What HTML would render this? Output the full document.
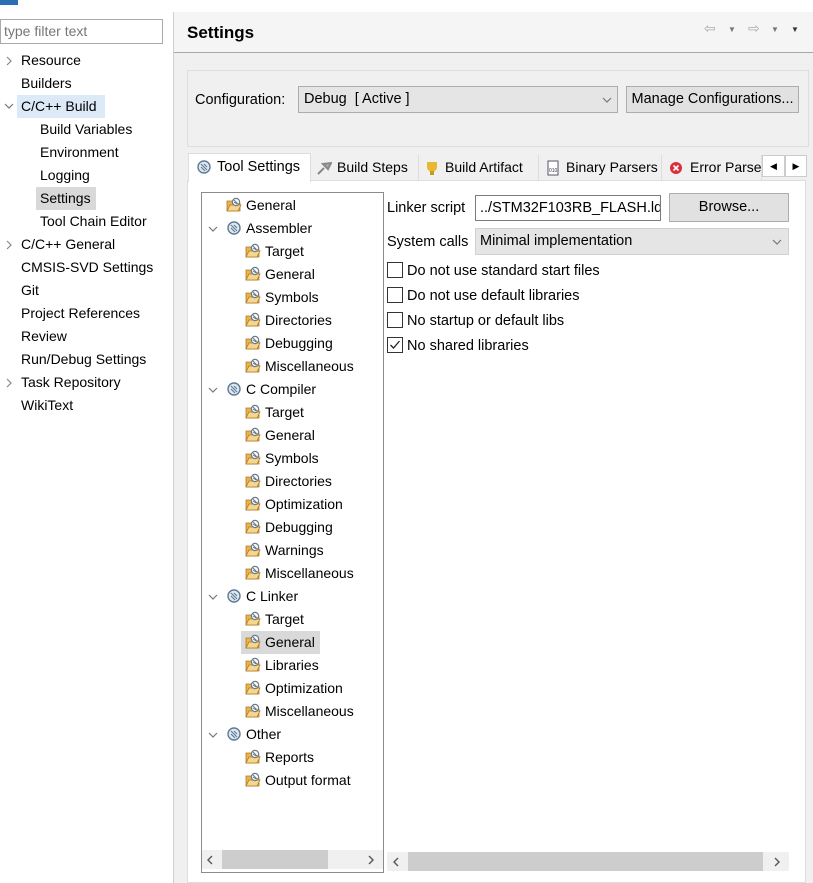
<!DOCTYPE html>
<html><head><meta charset="utf-8"><style>
*{box-sizing:border-box;margin:0;padding:0}
body{width:813px;height:883px;overflow:hidden;background:#fff;font-family:"Liberation Sans",sans-serif;font-size:14px;color:#000;position:relative}
.a{position:absolute;white-space:nowrap}
.r{position:absolute;height:22px;line-height:22px;white-space:nowrap}
svg.i{position:absolute;width:16px;height:16px}
svg.c{position:absolute;width:10px;height:10px}
.cb{position:absolute;width:16px;height:16px;border:1px solid #333;background:#fff;left:387px}
.sb{position:absolute;background:#f0f0f0}
.th{position:absolute;background:#cdcdcd}
.tab{position:absolute;top:155px;height:25px;line-height:25px;border-right:1px solid #ddd;background:#f0f0f0;padding-left:6px;white-space:nowrap;overflow:hidden}
</style></head><body>
<svg width="0" height="0" style="position:absolute">
<defs>
<g id="f"><path d="M1 4h5l1 2h7v8H1z" fill="#e9b24c" stroke="#b07a20" stroke-width="0.8"/><path d="M1 14l3-6h11l-3 6z" fill="#f6d68e" stroke="#b07a20" stroke-width="0.8"/><circle cx="10" cy="5" r="3.6" fill="#fff" stroke="#6a7b8c" stroke-width="1.2"/><path d="M8 3l4 4M8 5l3 2" stroke="#6a7b8c" stroke-width="1"/></g>
<g id="g"><circle cx="8" cy="8" r="6" fill="#dfe8f0" stroke="#5d7a94" stroke-width="1.4"/><path d="M5 5l6 6M5 8l4 4M8 5l3 3" stroke="#5d7a94" stroke-width="1.1"/></g>
<path id="cr" d="M3 1l4 4-4 4" stroke="#888" stroke-width="1.2" fill="none"/>
<path id="cd" d="M1 3l4 4 4-4" stroke="#777" stroke-width="1.2" fill="none"/>
<path id="cl" d="M7 1L3 5l4 4" stroke="#555" stroke-width="1.4" fill="none"/>
<path id="cR" d="M3 1l4 4-4 4" stroke="#555" stroke-width="1.4" fill="none"/>
</defs></svg>

<div class="a" style="left:0;top:0;width:18px;height:5px;background:#2a6fb5"></div>

<div class="a" style="left:0;top:19px;width:163px;height:25px;border:1px solid #aaa;color:#777;padding-left:3px;line-height:23px;font-size:14px">type filter text</div>
<div class="a" style="left:17px;top:95px;width:88px;height:23px;background:#dce9f7"></div>
<div class="a" style="left:36px;top:187px;width:60px;height:23px;background:#d9d9d9"></div>
<svg class="c" style="left:4px;top:56px" viewBox="0 0 10 10"><use href="#cr"/></svg>
<svg class="c" style="left:4px;top:101px" viewBox="0 0 10 10"><use href="#cd"/></svg>
<svg class="c" style="left:4px;top:240px" viewBox="0 0 10 10"><use href="#cr"/></svg>
<svg class="c" style="left:4px;top:378px" viewBox="0 0 10 10"><use href="#cr"/></svg>
<div class="r" style="left:21px;top:49px">Resource</div>
<div class="r" style="left:21px;top:72px">Builders</div>
<div class="r" style="left:21px;top:95px">C/C++ Build</div>
<div class="r" style="left:40px;top:118px">Build Variables</div>
<div class="r" style="left:40px;top:141px">Environment</div>
<div class="r" style="left:40px;top:164px">Logging</div>
<div class="r" style="left:40px;top:187px">Settings</div>
<div class="r" style="left:40px;top:210px">Tool Chain Editor</div>
<div class="r" style="left:21px;top:233px">C/C++ General</div>
<div class="r" style="left:21px;top:256px">CMSIS-SVD Settings</div>
<div class="r" style="left:21px;top:279px">Git</div>
<div class="r" style="left:21px;top:302px">Project References</div>
<div class="r" style="left:21px;top:325px">Review</div>
<div class="r" style="left:21px;top:348px">Run/Debug Settings</div>
<div class="r" style="left:21px;top:371px">Task Repository</div>
<div class="r" style="left:21px;top:394px">WikiText</div>

<div class="a" style="left:173px;top:12px;width:1px;height:871px;background:#d0d0d0"></div>
<div class="a" style="left:174px;top:12px;width:639px;height:871px;background:#f0f0f0"></div>
<div class="a" style="left:174px;top:12px;width:639px;height:41px;background:#f5f5f5;border-bottom:1px solid #a8a8a8"></div>
<div class="a" style="left:187px;top:23px;font-weight:bold;font-size:17px">Settings</div>
<div class="a" style="left:704px;top:20px;color:#aaa;font-size:14px">&#x21E6;</div>
<div class="a" style="left:728px;top:25px;color:#777;font-size:8px">&#x25BC;</div>
<div class="a" style="left:748px;top:20px;color:#aaa;font-size:14px">&#x21E8;</div>
<div class="a" style="left:771px;top:25px;color:#777;font-size:8px">&#x25BC;</div>
<div class="a" style="left:791px;top:25px;color:#333;font-size:8px">&#x25BC;</div>

<div class="a" style="left:187px;top:70px;width:622px;height:77px;border:1px solid #ddd;background:#f0f0f0"></div>
<div class="a" style="left:195px;top:92px;font-size:14.5px">Configuration:</div>
<div class="a" style="left:298px;top:86px;width:320px;height:27px;background:#e5e5e5;border:1px solid #adadad;line-height:25px;padding-left:5px;font-size:14.5px">Debug&nbsp; [ Active ]<svg class="c" style="right:5px;top:8px" viewBox="0 0 10 10"><use href="#cd"/></svg></div>
<div class="a" style="left:626px;top:86px;width:173px;height:27px;background:#e1e1e1;border:1px solid #adadad;line-height:25px;text-align:center;font-size:14.5px">Manage Configurations...</div>

<div class="tab" style="left:311px;width:108px;padding-left:26px">Build Steps</div>
<div class="tab" style="left:419px;width:120px;padding-left:26px">Build Artifact</div>
<div class="tab" style="left:539px;width:123px;padding-left:27px">Binary Parsers</div>
<div class="tab" style="left:662px;width:100px;padding-left:28px">Error Parsers</div>
<div class="a" style="left:762px;top:155px;width:23px;height:22px;border:1px solid #ccc;background:#fff;text-align:center;font-size:9px;line-height:20px">&#x25C0;</div>
<div class="a" style="left:785px;top:155px;width:22px;height:22px;border:1px solid #ccc;background:#fff;text-align:center;font-size:9px;line-height:20px">&#x25B6;</div>
<svg class="i" style="left:316px;top:160px" viewBox="0 0 16 16"><path d="M2 14l6-6M7 4l5 5 3-6z" stroke="#888" stroke-width="2" fill="#aab"/></svg>
<svg class="i" style="left:424px;top:160px" viewBox="0 0 16 16"><path d="M3 2h10v5a5 5 0 0 1-10 0z" fill="#e8b830"/><rect x="6" y="11" width="4" height="4" fill="#c99820"/></svg>
<svg class="i" style="left:545px;top:160px" viewBox="0 0 16 16"><rect x="3" y="1" width="10" height="14" fill="#fff" stroke="#556"/><text x="4" y="12" font-size="5" fill="#335">010</text></svg>
<svg class="i" style="left:668px;top:160px" viewBox="0 0 16 16"><circle cx="8" cy="8" r="6" fill="#d9303a"/><path d="M5.5 5.5l5 5M10.5 5.5l-5 5" stroke="#fff" stroke-width="1.6"/></svg>

<div class="a" style="left:187px;top:180px;width:619px;height:703px;background:#fff;border:1px solid #ddd"></div>
<div class="a" style="left:188px;top:153px;width:123px;height:29px;background:#fff;border:1px solid #ddd;border-bottom:none;line-height:27px;padding-left:28px;font-size:14.5px">Tool Settings</div>
<svg class="i" style="left:196px;top:159px" viewBox="0 0 16 16"><use href="#g"/></svg>

<div class="a" style="left:201px;top:192px;width:183px;height:681px;border:1px solid #8c8c8c;background:#fff"></div>
<div class="a" style="left:241px;top:631px;width:79px;height:23px;background:#d9d9d9"></div>

<div class="r" style="left:246px;top:194px">General</div><svg class="i" style="left:226px;top:197px" viewBox="0 0 16 16"><use href="#f"/></svg>
<svg class="c" style="left:208px;top:224px" viewBox="0 0 10 10"><use href="#cd"/></svg><div class="r" style="left:246px;top:217px">Assembler</div><svg class="i" style="left:226px;top:220px" viewBox="0 0 16 16"><use href="#g"/></svg>
<div class="r" style="left:265px;top:240px">Target</div><svg class="i" style="left:245px;top:243px" viewBox="0 0 16 16"><use href="#f"/></svg>
<div class="r" style="left:265px;top:263px">General</div><svg class="i" style="left:245px;top:266px" viewBox="0 0 16 16"><use href="#f"/></svg>
<div class="r" style="left:265px;top:286px">Symbols</div><svg class="i" style="left:245px;top:289px" viewBox="0 0 16 16"><use href="#f"/></svg>
<div class="r" style="left:265px;top:309px">Directories</div><svg class="i" style="left:245px;top:312px" viewBox="0 0 16 16"><use href="#f"/></svg>
<div class="r" style="left:265px;top:332px">Debugging</div><svg class="i" style="left:245px;top:335px" viewBox="0 0 16 16"><use href="#f"/></svg>
<div class="r" style="left:265px;top:355px">Miscellaneous</div><svg class="i" style="left:245px;top:358px" viewBox="0 0 16 16"><use href="#f"/></svg>
<svg class="c" style="left:208px;top:385px" viewBox="0 0 10 10"><use href="#cd"/></svg><div class="r" style="left:246px;top:378px">C Compiler</div><svg class="i" style="left:226px;top:381px" viewBox="0 0 16 16"><use href="#g"/></svg>
<div class="r" style="left:265px;top:401px">Target</div><svg class="i" style="left:245px;top:404px" viewBox="0 0 16 16"><use href="#f"/></svg>
<div class="r" style="left:265px;top:424px">General</div><svg class="i" style="left:245px;top:427px" viewBox="0 0 16 16"><use href="#f"/></svg>
<div class="r" style="left:265px;top:447px">Symbols</div><svg class="i" style="left:245px;top:450px" viewBox="0 0 16 16"><use href="#f"/></svg>
<div class="r" style="left:265px;top:470px">Directories</div><svg class="i" style="left:245px;top:473px" viewBox="0 0 16 16"><use href="#f"/></svg>
<div class="r" style="left:265px;top:493px">Optimization</div><svg class="i" style="left:245px;top:496px" viewBox="0 0 16 16"><use href="#f"/></svg>
<div class="r" style="left:265px;top:516px">Debugging</div><svg class="i" style="left:245px;top:519px" viewBox="0 0 16 16"><use href="#f"/></svg>
<div class="r" style="left:265px;top:539px">Warnings</div><svg class="i" style="left:245px;top:542px" viewBox="0 0 16 16"><use href="#f"/></svg>
<div class="r" style="left:265px;top:562px">Miscellaneous</div><svg class="i" style="left:245px;top:565px" viewBox="0 0 16 16"><use href="#f"/></svg>
<svg class="c" style="left:208px;top:592px" viewBox="0 0 10 10"><use href="#cd"/></svg><div class="r" style="left:246px;top:585px">C Linker</div><svg class="i" style="left:226px;top:588px" viewBox="0 0 16 16"><use href="#g"/></svg>
<div class="r" style="left:265px;top:608px">Target</div><svg class="i" style="left:245px;top:611px" viewBox="0 0 16 16"><use href="#f"/></svg>
<div class="r" style="left:265px;top:631px">General</div><svg class="i" style="left:245px;top:634px" viewBox="0 0 16 16"><use href="#f"/></svg>
<div class="r" style="left:265px;top:654px">Libraries</div><svg class="i" style="left:245px;top:657px" viewBox="0 0 16 16"><use href="#f"/></svg>
<div class="r" style="left:265px;top:677px">Optimization</div><svg class="i" style="left:245px;top:680px" viewBox="0 0 16 16"><use href="#f"/></svg>
<div class="r" style="left:265px;top:700px">Miscellaneous</div><svg class="i" style="left:245px;top:703px" viewBox="0 0 16 16"><use href="#f"/></svg>
<svg class="c" style="left:208px;top:730px" viewBox="0 0 10 10"><use href="#cd"/></svg><div class="r" style="left:246px;top:723px">Other</div><svg class="i" style="left:226px;top:726px" viewBox="0 0 16 16"><use href="#g"/></svg>
<div class="r" style="left:265px;top:746px">Reports</div><svg class="i" style="left:245px;top:749px" viewBox="0 0 16 16"><use href="#f"/></svg>
<div class="r" style="left:265px;top:769px">Output format</div><svg class="i" style="left:245px;top:772px" viewBox="0 0 16 16"><use href="#f"/></svg>

<div class="sb" style="left:202px;top:850px;width:181px;height:19px"></div>
<div class="th" style="left:222px;top:850px;width:106px;height:19px"></div>
<svg class="c" style="left:205px;top:855px" viewBox="0 0 10 10"><use href="#cl"/></svg>
<svg class="c" style="left:366px;top:855px" viewBox="0 0 10 10"><use href="#cR"/></svg>

<div class="a" style="left:387px;top:200px;font-size:14.5px">Linker script</div>
<div class="a" style="left:475px;top:195px;width:186px;height:26px;border:1px solid #7a7a7a;line-height:24px;padding-left:4px;overflow:hidden;font-size:14.5px">../STM32F103RB_FLASH.ld</div>
<div class="a" style="left:669px;top:193px;width:120px;height:29px;background:#e1e1e1;border:1px solid #adadad;line-height:27px;text-align:center;font-size:14.5px">Browse...</div>
<div class="a" style="left:387px;top:234px;font-size:14.5px">System calls</div>
<div class="a" style="left:475px;top:228px;width:314px;height:27px;background:#e5e5e5;border:1px solid #d0d0d0;line-height:25px;padding-left:4px;font-size:14.5px">Minimal implementation<svg class="c" style="right:6px;top:8px" viewBox="0 0 10 10"><use href="#cd"/></svg></div>
<div class="cb" style="top:262px"></div><div class="a" style="left:407px;top:263px;font-size:14.5px">Do not use standard start files</div>
<div class="cb" style="top:287px"></div><div class="a" style="left:407px;top:288px;font-size:14.5px">Do not use default libraries</div>
<div class="cb" style="top:312px"></div><div class="a" style="left:407px;top:313px;font-size:14.5px">No startup or default libs</div>
<div class="cb" style="top:337px"><svg width="14" height="14" viewBox="0 0 14 14" style="position:absolute;left:0;top:0"><path d="M2.5 7l3 3 6-7" stroke="#222" stroke-width="1.3" fill="none"/></svg></div><div class="a" style="left:407px;top:338px;font-size:14.5px">No shared libraries</div>

<div class="sb" style="left:387px;top:852px;width:402px;height:19px"></div>
<div class="th" style="left:408px;top:852px;width:355px;height:19px"></div>
<svg class="c" style="left:391px;top:857px" viewBox="0 0 10 10"><use href="#cl"/></svg>
<svg class="c" style="left:772px;top:857px" viewBox="0 0 10 10"><use href="#cR"/></svg>
</body></html>
